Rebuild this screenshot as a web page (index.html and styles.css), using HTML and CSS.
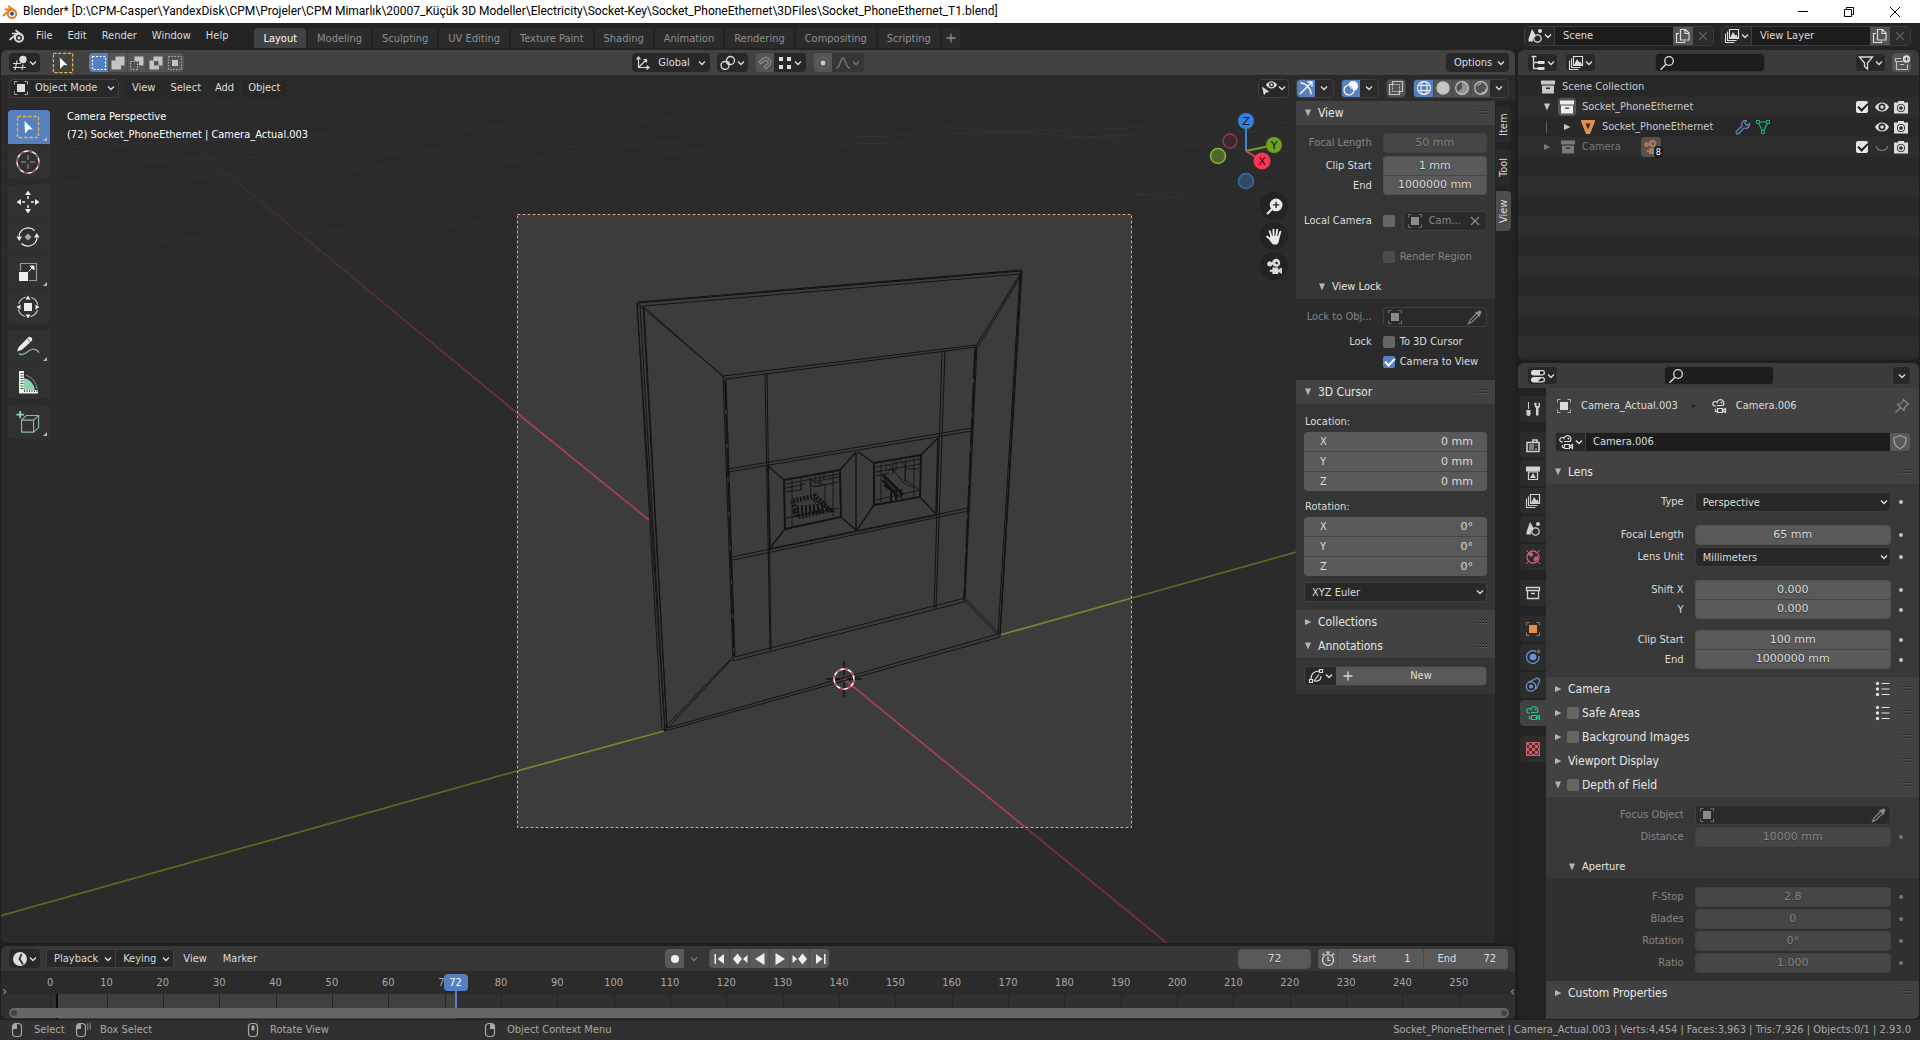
FILE: index.html
```html
<!DOCTYPE html>
<html lang="en">
<head>
<meta charset="utf-8">
<title>Blender</title>
<link rel="stylesheet" href="styles.css">
</head>
<body>
<svg class="sprite" aria-hidden="true">
  <defs>
    <symbol id="chev" viewBox="0 0 10 10"><path d="M2 3.5 5 6.5 8 3.5" fill="none" stroke="currentColor" stroke-width="1.4"/></symbol>
    <symbol id="tri-down" viewBox="0 0 8 8"><path d="M1 .5H7L4 7.5z" fill="currentColor"/></symbol>
    <symbol id="tri-right" viewBox="0 0 8 8"><path d="M1 1V7L7.500 4z" fill="currentColor"/></symbol>
    <symbol id="grip" viewBox="0 0 11 6"><path d="M0 .5h11M0 3.500h11" stroke="#151515" stroke-dasharray="1 2"/><path d="M0 1.500h11M0 4.500h11" stroke="#6a6a6a" stroke-dasharray="1 2"/></symbol>
    <symbol id="close" viewBox="0 0 16 16"><path d="M4 4 12 12M12 4 4 12" fill="none" stroke="currentColor" stroke-width="1.2"/></symbol>
    <symbol id="plus" viewBox="0 0 16 16"><path d="M8 3.500V12.500M3.500 8H12.500" fill="none" stroke="currentColor" stroke-width="1.3"/></symbol>
    <symbol id="blender" viewBox="0 0 16 16"><path d="M1 11.500 8.500 5.500H3.500M7 2.500 12.500 7" fill="none" stroke="currentColor" stroke-width="1.7" stroke-linecap="round"/><circle cx="10" cy="9.800" r="4" fill="none" stroke="currentColor" stroke-width="2"/><circle cx="10" cy="9.800" r="1.600" fill="currentColor"/></symbol>
    <symbol id="object" viewBox="0 0 16 16"><path d="M4 4h8v8H4z" fill="currentColor"/><path d="M4.500 1.500h-3v3M11.500 1.500h3v3M4.500 14.500h-3v-3M11.500 14.500h3v-3" fill="none" stroke="currentColor" opacity=".7"/></symbol>
    <symbol id="view3d" viewBox="0 0 16 16"><path d="M1 8.500h8M1 12.500h13M5 5.500 3 15M11 9.500l-1 5.500" fill="none" stroke="currentColor" stroke-width="1.2"/><circle cx="11" cy="4.500" r="3.700" fill="currentColor"/></symbol>
    <symbol id="sel-set" viewBox="0 0 16 16"><path d="M1.500 1.500h13v13h-13z" fill="none" stroke="currentColor" stroke-width="1.200" stroke-dasharray="2 1.600"/></symbol>
    <symbol id="sel-add" viewBox="0 0 16 16"><path d="M5.500 1.500h9v9H11v4H1.500V5.500h4z" fill="currentColor"/></symbol>
    <symbol id="sel-sub" viewBox="0 0 16 16"><path d="M5.500 1.500h9v9H10V6H5.500z" fill="currentColor"/><path d="M1.500 6.500h7v8h-7z" fill="none" stroke="currentColor" stroke-dasharray="1.500 1.500"/></symbol>
    <symbol id="sel-inv" viewBox="0 0 16 16"><path fill-rule="evenodd" d="M5.500 1.500h9v9H11v4H1.500V5.500h4zM6 6v4.500h4.500V6z" fill="currentColor"/></symbol>
    <symbol id="sel-int" viewBox="0 0 16 16"><path d="M5 5h6v6H5z" fill="currentColor"/><path d="M1.500 1.500h13v13h-13z" fill="none" stroke="currentColor" stroke-dasharray="1.500 1.500" opacity=".8"/></symbol>
    <symbol id="axes" viewBox="0 0 16 16"><path d="M3.500 13V2M1.500 4.500l2-2.500 2 2.500M3 12.500h11M11.500 10.500l2.500 2-2.500 2M4 12 11 5M8.500 4.500H11.500V7.500" fill="none" stroke="currentColor" stroke-width="1.200"/></symbol>
    <symbol id="pivot" viewBox="0 0 16 16"><circle cx="10.500" cy="5.500" r="4" fill="none" stroke="currentColor" stroke-width="1.300"/><circle cx="5" cy="10.500" r="4" fill="none" stroke="currentColor" stroke-width="1.300"/><circle cx="8" cy="8" r="1.800" fill="currentColor"/></symbol>
    <symbol id="magnet" viewBox="0 0 16 16"><path d="M2 7 6.500 3A5 5 0 0 1 13 10L9 14 7 12 11 8.500A2.300 2.300 0 0 0 8 5.500L4 9z" fill="none" stroke="currentColor" stroke-width="1.200"/></symbol>
    <symbol id="grid4" viewBox="0 0 16 16"><path d="M2 2h4v4H2zM10 2h4v4h-4zM2 10h4v4H2zM10 10h4v4h-4z" fill="currentColor"/></symbol>
    <symbol id="prop" viewBox="0 0 16 16"><circle cx="8" cy="8" r="6" fill="none" stroke="currentColor" opacity=".4"/><circle cx="8" cy="8" r="2.400" fill="#ccc"/></symbol>
    <symbol id="falloff" viewBox="0 0 16 16"><path d="M1 13C6 13 5 3 8 3s2 10 7 10" fill="none" stroke="currentColor" stroke-width="1.300"/></symbol>
    <symbol id="visibility" viewBox="0 0 16 16"><path d="M5 5C8 0 13 0 16 5 13 9.500 8 9.500 5 5z" fill="currentColor"/><circle cx="10.500" cy="4.800" r="2.500" fill="#2b2b2b"/><circle cx="10.500" cy="4.800" r="1.200" fill="currentColor"/><path d="M1 6.500 8.500 12 5 12.500 3 15.500z" fill="currentColor"/></symbol>
    <symbol id="gizmo" viewBox="0 0 16 16"><path d="M2.500 3C8 3 13 8 13 14.500M2 14 13.500 2.500M9.500 2H14V6.500" fill="none" stroke="currentColor" stroke-width="1.300"/></symbol>
    <symbol id="overlays" viewBox="0 0 16 16"><circle cx="10" cy="6" r="5" fill="currentColor"/><circle cx="6" cy="10" r="5" fill="#5680c2" stroke="currentColor" stroke-width="1.200"/><path d="M6 5a5 5 0 0 1 5 5 5 5 0 0 1-5-5z" fill="currentColor" opacity=".6"/></symbol>
    <symbol id="xray" viewBox="0 0 16 16"><path d="M4.500 1.500h10v10h-3v3h-10v-10h3z" fill="none" stroke="currentColor" stroke-width="1.200"/><path d="M4.500 4.500h7v7M4.500 4.500v7h7" fill="none" stroke="currentColor" stroke-dasharray="2 1"/></symbol>
    <symbol id="wire" viewBox="0 0 16 16"><g fill="none" stroke="currentColor" stroke-width="1.100"><circle cx="8" cy="8" r="6.500"/><ellipse cx="8" cy="8" rx="3" ry="6.500"/><path d="M2 5.500h12M2 10.500h12"/></g></symbol>
    <symbol id="solid" viewBox="0 0 16 16"><circle cx="8" cy="8" r="6.700" fill="currentColor"/></symbol>
    <symbol id="matprev" viewBox="0 0 16 16"><circle cx="8" cy="8" r="6.300" fill="none" stroke="currentColor" stroke-width="1.200"/><path d="M8 1.500V8L3.500 12.500A6.500 6.500 0 0 0 14.500 8 6.500 6.500 0 0 0 8 1.500z" fill="currentColor" opacity=".55"/></symbol>
    <symbol id="rendered" viewBox="0 0 16 16"><circle cx="8" cy="8" r="6.300" fill="none" stroke="currentColor" stroke-width="1.200"/><path d="M4.500 6A4.500 4.500 0 0 1 8 3.500M13 8.500A5 5 0 0 1 8 13" fill="none" stroke="currentColor"/></symbol>
    <symbol id="scene" viewBox="0 0 16 16"><path d="M5 1 9 8A4.500 4.500 0 0 0 6 13.500H1.500V11z" fill="currentColor"/><circle cx="10.500" cy="10.500" r="3.700" fill="none" stroke="currentColor" stroke-width="1.300"/><circle cx="13" cy="3" r="2" fill="currentColor"/></symbol>
    <symbol id="layer" viewBox="0 0 16 16"><path d="M5.500 1.500h9v9h-9z" fill="none" stroke="currentColor" stroke-width="1.200"/><path d="M6 10 9 4l2.500 3.500 1-1L14 10z" fill="currentColor"/><path d="M3.500 3.500v9h9M1.500 5.500v9h9" fill="none" stroke="currentColor" stroke-width="1.100"/></symbol>
    <symbol id="copy" viewBox="0 0 16 16"><path d="M5.500 1.500h5l3.500 3.500v7H5.500zM10 1.500V5.500H14M4 5.500H1.500v9h8V13" fill="none" stroke="currentColor" stroke-width="1.200"/></symbol>
    <symbol id="tree" viewBox="0 0 16 16"><path d="M1.500 1.500h5M3.500 2v11.500H8M3.500 7.500H8" fill="none" stroke="currentColor" stroke-width="1.300"/><path d="M8 6h6.500v3H8zM8 12h6.500v3H8z" fill="currentColor"/></symbol>
    <symbol id="search" viewBox="0 0 16 16"><circle cx="10" cy="6" r="4.300" fill="none" stroke="currentColor" stroke-width="1.300"/><path d="M7 9.200 1.500 14.700" stroke="currentColor" stroke-width="1.500"/></symbol>
    <symbol id="funnel" viewBox="0 0 16 16"><path d="M1.500 2h13L9.500 8v6L6.500 11.500V8z" fill="none" stroke="currentColor" stroke-width="1.300"/></symbol>
    <symbol id="newcol" viewBox="0 0 16 16"><path d="M7 3.500H1.500v3H9M2.500 6.500v8h11v-5M6 9.500h4" fill="none" stroke="currentColor" stroke-width="1.200" opacity=".8"/><circle cx="12.500" cy="4" r="3.700" fill="currentColor"/><path d="M12.500 2v4M10.500 4h4" stroke="#555"/></symbol>
    <symbol id="collection" viewBox="0 0 16 16"><path d="M1 1.500h14v4H1z" fill="currentColor"/><path fill-rule="evenodd" d="M2 6.500h12V14.500H2zM6 8.500v1.500h4V8.500z" fill="currentColor"/></symbol>
    <symbol id="col-line" viewBox="0 0 16 16"><path d="M1.500 2.500h13v3h-13zM2.500 5.500h11v8h-11zM6 8.500h4" fill="none" stroke="currentColor" stroke-width="1.300"/></symbol>
    <symbol id="mesh" viewBox="0 0 16 16"><path fill-rule="evenodd" d="M1 1h14v1.500L10 15H6L1 2.500zM5.500 4.500 8 10.500 10.500 4.500z" fill="currentColor"/></symbol>
    <symbol id="wrench" viewBox="0 0 16 16"><path d="M14.500 4.500 12 6.500 9.500 4 11.500 1.500A4 4 0 0 0 7 7L1.500 12.200A1.500 1.500 0 0 0 3.800 14.500L9 9a4 4 0 0 0 5.500-4.500z" fill="none" stroke="currentColor" stroke-width="1.200"/></symbol>
    <symbol id="meshdata" viewBox="0 0 16 16"><path d="M3 3h10L8 13z" fill="none" stroke="currentColor" stroke-width="1.200"/><path d="M1.500 1.500h3v3h-3zM11.500 1.500h3v3h-3zM6.500 11.500h3v3h-3z" fill="#2a2a2a" stroke="currentColor"/></symbol>
    <symbol id="eye" viewBox="0 0 16 16"><path fill-rule="evenodd" d="M1 8C4 2 12 2 15 8 12 14 4 14 1 8zm7-3.500a3.500 3.500 0 1 0 0 7 3.500 3.500 0 0 0 0-7z" fill="currentColor"/><circle cx="8" cy="8" r="1.800" fill="currentColor"/></symbol>
    <symbol id="eye-off" viewBox="0 0 16 16"><path d="M2 7C4 13 12 13 14 7" fill="none" stroke="currentColor" stroke-width="1.200"/></symbol>
    <symbol id="photo" viewBox="0 0 16 16"><path fill-rule="evenodd" d="M5 2h6v1.500h4v11H1V3.500h4zM8 5a4 4 0 1 0 0 8 4 4 0 0 0 0-8z" fill="currentColor"/><circle cx="8" cy="9" r="2.500" fill="none" stroke="currentColor" stroke-width="1.300"/></symbol>
    <symbol id="cam" viewBox="0 0 16 16"><g fill="none" stroke="currentColor" stroke-width="1.200"><path d="M5 8H3.500A2.300 2.300 0 1 1 6 4.500 3.500 3.500 0 1 1 12 7.500H6M6.500 10.500h5v4h-5zM11.500 12.500 14.500 10.500v4zM4.500 11v2.500h2"/></g><circle cx="10.500" cy="4.500" r="1" fill="currentColor"/></symbol>
    <symbol id="cam-solid" viewBox="0 0 16 16"><path fill-rule="evenodd" d="M3.500 3A2.500 2.500 0 1 0 6 6a3.800 3.800 0 1 0-.300-1.500A2.500 2.500 0 0 0 3.500 3zM10 3.500a1.200 1.200 0 1 1 0 2.400 1.200 1.200 0 0 1 0-2.400zM6 9h5.500v2L15 9v6l-3.500-2v2H6v-2H3.500v-2H6z" fill="currentColor"/></symbol>
    <symbol id="props" viewBox="0 0 16 16"><rect x="1" y="2" width="14" height="5.500" rx="2.700" fill="currentColor"/><rect x="1" y="9" width="14" height="5.500" rx="2.700" fill="currentColor"/><path d="M10 3.200h2.500a1.600 1.600 0 0 1 0 3.100H10z" fill="#222"/><path d="M11 10.200h1.500a1.600 1.600 0 0 1 0 3.100H8z" fill="#222"/></symbol>
    <symbol id="tool" viewBox="0 0 16 16"><path d="M3.500 1v7" stroke="currentColor"/><path d="M1.500 9h4v5q-2 2-4 0zM9 2 10 6l1 1v7.500h2.500V7l1.500-1V2l-1.500-.500V5h-2V1.500z" fill="currentColor"/></symbol>
    <symbol id="render" viewBox="0 0 16 16"><path d="M2 5.500h12v9H2zM8 5V3h4v2" fill="none" stroke="currentColor" stroke-width="1.600"/><path d="M4 8h5M4 10h5M4 12h5M11 8v1M11 11v2" stroke="currentColor"/></symbol>
    <symbol id="output" viewBox="0 0 16 16"><path d="M1 1.500h14v5H1z" fill="currentColor"/><path d="M3.500 7h9v7.500h-9z" fill="none" stroke="currentColor" stroke-width="1.200"/><path d="M5 13 8 8l3 5z" fill="currentColor"/></symbol>
    <symbol id="world" viewBox="0 0 16 16"><circle cx="8" cy="8" r="6" fill="none" stroke="currentColor" stroke-width="1.300"/><path d="M3 3.500 7 3.500 8.500 5.500 6.500 8 3 6zM9 8l4-1v3l-3 3-1.500-2z" fill="currentColor"/><path d="M1 1 3.500 3.500M12.500 12.500 15 15M12.500 3.500 15 1M1 15 3.500 12.500" stroke="currentColor"/></symbol>
    <symbol id="physics" viewBox="0 0 16 16"><path d="M11 2.600A6.300 6.300 0 1 0 14 7" fill="none" stroke="currentColor" stroke-width="1.300"/><circle cx="8" cy="8" r="3.300" fill="currentColor"/><circle cx="13.500" cy="2.500" r="2" fill="currentColor" opacity=".6"/></symbol>
    <symbol id="constraint" viewBox="0 0 16 16"><path d="M3 5.500 11 1.500A2.500 2.500 0 0 1 14.500 4.500L11 12" fill="none" stroke="currentColor" stroke-width="1.300"/><circle cx="6" cy="9.500" r="4.700" fill="none" stroke="currentColor" stroke-width="1.300"/><circle cx="6" cy="9.500" r="2" fill="currentColor"/></symbol>
    <symbol id="texture" viewBox="0 0 16 16"><path d="M1 1h14v14H1z" fill="#5a2a30"/><path d="M1 1h3v3H1zM7 1h3v3H7zM13 1h2v3h-2zM4 4h3v3H4zM10 4h3v3h-3zM1 7h3v3H1zM7 7h3v3H7zM13 7h2v3h-2zM4 10h3v3H4zM10 10h3v3h-3zM1 13h3v2H1zM7 13h3v2H7zM13 13h2v2h-2z" fill="currentColor"/><path d="M1.500 1.500h13v13h-13z" fill="none" stroke="currentColor"/></symbol>
    <symbol id="pin" viewBox="0 0 16 16"><path d="M9.500 1.500 14.500 6.500 13 7 10.500 9.500 10 12.500 3.500 6.500 6.500 5.800 9 3.200zM6.500 9.500 1.500 14.500" fill="none" stroke="currentColor" stroke-width="1.200"/></symbol>
    <symbol id="shield" viewBox="0 0 16 16"><path d="M8 1.500Q11 3.500 14 3.500C14.500 9 12 13 8 14.800 4 13 1.500 9 2 3.500Q5 3.500 8 1.500z" fill="none" stroke="currentColor" stroke-width="1.200"/></symbol>
    <symbol id="list" viewBox="0 0 16 16"><path d="M6.500 2.500h8M6.500 8h8M6.500 13.500h8" stroke="currentColor" stroke-width="1.200"/><circle cx="2.500" cy="2.500" r="1.700" fill="currentColor"/><circle cx="2.500" cy="8" r="1.700" fill="currentColor"/><circle cx="2.500" cy="13.500" r="1.700" fill="currentColor"/></symbol>
    <symbol id="dropper" viewBox="0 0 16 16"><path d="M10 3 12 1.500Q14.500 1 14.500 4L13 6 13.500 7 12.500 8 8 3.500 9 2.500z" fill="currentColor"/><path d="M9 5 3 11 1.500 14.500 5 13 11 7" fill="none" stroke="currentColor" stroke-width="1.200"/></symbol>
    <symbol id="stroke" viewBox="0 0 16 16"><path d="M1.500 11.500h3v3h-3zM11.500 1.500h3v3h-3zM3 11.500Q3 3 11.500 3M6 13Q13 14 13 8M6 13 11 6.500" fill="none" stroke="currentColor" stroke-width="1.200"/></symbol>
    <symbol id="clock" viewBox="0 0 16 16"><path d="M8 1A7 7 0 1 0 8 15 7 7 0 1 0 8 1z" fill="currentColor"/><path d="M9.500 3 7.500 8 11 13.500" fill="none" stroke="#252525" stroke-width="1.700"/></symbol>
    <symbol id="stopwatch" viewBox="0 0 16 16"><g fill="none" stroke="currentColor" stroke-width="1.200"><circle cx="8" cy="9" r="5.500"/><path d="M8 3.500V1M6 1h4M12 4.500 14 2.500M8 5.500V9.500H10.500M2.500 4 4 2.500"/></g></symbol>
    <symbol id="j-start" viewBox="0 0 16 16"><path d="M2.500 3h1.500v10H2.500zM12 3v10L5.500 8z" fill="currentColor"/></symbol>
    <symbol id="j-end" viewBox="0 0 16 16"><path d="M12 3h1.500v10H12zM4 3v10L10.500 8z" fill="currentColor"/></symbol>
    <symbol id="k-prev" viewBox="0 0 16 16"><path d="M5.500 2.500 10 8 5.500 13.500 1 8zM15.500 4v8L11 8z" fill="currentColor"/></symbol>
    <symbol id="k-next" viewBox="0 0 16 16"><path d="M10.500 2.500 15 8 10.500 13.500 6 8zM.5 4v8L5 8z" fill="currentColor"/></symbol>
    <symbol id="p-rev" viewBox="0 0 16 16"><path d="M12.500 2v12L3 8z" fill="currentColor"/></symbol>
    <symbol id="p-fwd" viewBox="0 0 16 16"><path d="M3.500 2v12L13 8z" fill="currentColor"/></symbol>
    <symbol id="m-left" viewBox="0 0 16 16"><rect x="3.500" y="1.500" width="9" height="13" rx="3.500" fill="none" stroke="currentColor" stroke-width="1.200"/><path d="M3.500 7V4.500Q4 1.500 8 1.500V7z" fill="currentColor"/></symbol>
    <symbol id="m-right" viewBox="0 0 16 16"><rect x="3.500" y="1.500" width="9" height="13" rx="3.500" fill="none" stroke="currentColor" stroke-width="1.200"/><path d="M12.500 7V4.500Q12 1.500 8 1.500V7z" fill="currentColor"/></symbol>
    <symbol id="m-mid" viewBox="0 0 16 16"><rect x="3.500" y="1.500" width="9" height="13" rx="3.500" fill="none" stroke="currentColor" stroke-width="1.200"/><rect x="6.500" y="3.500" width="3" height="5" rx="1" fill="currentColor"/></symbol>
    <symbol id="m-drag" viewBox="0 0 16 16"><rect x="1.500" y="1.500" width="9" height="13" rx="3.500" fill="none" stroke="currentColor" stroke-width="1.200"/><path d="M1.500 7V4.500Q2 1.500 6 1.500V7z" fill="currentColor"/><path d="M12.500 1.500Q13.500 4 12.500 7.500M14.800 1Q16 4 14.800 8" fill="none" stroke="currentColor" stroke-width=".8"/></symbol>
    <symbol id="t-select" viewBox="0 0 24 24"><path d="M1.500 1.500h21v21h-21z" fill="none" stroke="#e9b73f" stroke-width="1.300" stroke-dasharray="3.500 1.800"/><path d="M8.500 6 17 14.500 12.800 14.300 9 18.500z" fill="#fff"/></symbol>
    <symbol id="t-cursor" viewBox="0 0 24 24"><circle cx="12" cy="12" r="11" fill="none" stroke="#eee" stroke-width="1.300"/><circle cx="12" cy="12" r="11" fill="none" stroke="#a04452" stroke-width="1.400" stroke-dasharray="4.300 4.300"/><path d="M12 5v5M12 14v5M5 12h5M14 12h5" stroke="#999"/></symbol>
    <symbol id="t-move" viewBox="0 0 24 24"><path d="M12 .5 15 5H9zM12 23.500 9 19h6zM.5 12 5 9v6zM23.500 12 19 15V9z" fill="#eee"/><path d="M12 6v3M12 15v3M6 12h3M15 12h3" stroke="#eee" stroke-width="1.500"/></symbol>
    <symbol id="t-rotate" viewBox="0 0 24 24"><path d="M3 11A9.200 9.200 0 0 1 18.500 5.500M21 13A9.200 9.200 0 0 1 5.500 18.500" fill="none" stroke="#eee" stroke-width="1.200"/><path d="M.5 11.500h5.500L3.200 16zM18 12.500h5.500L20.800 8z" fill="#eee"/><path d="M12 8.500 15.500 12 12 15.500 8.500 12z" fill="#aaa"/></symbol>
    <symbol id="t-scale" viewBox="0 0 24 24"><path d="M4.500 11V3.500h16v17H13" fill="none" stroke="#999" stroke-width="1.200"/><path d="M3 12h9v9H3z" fill="#eee"/><path d="M12.500 11.500 17 7M14 6h4v4z" stroke="#eee" fill="#eee"/></symbol>
    <symbol id="t-transform" viewBox="0 0 24 24"><circle cx="12" cy="12" r="10" fill="none" stroke="#ccc" stroke-width="1.200" stroke-dasharray="10 5.700" stroke-dashoffset="-3"/><path d="M8 8h8v8H8z" fill="#eee"/><path d="M12 .5 14.500 4.500h-5zM12 23.500 9.500 19.500h5zM.5 12 4.500 9.500v5zM23.500 12 19.500 14.500v-5z" fill="#eee"/></symbol>
    <symbol id="t-annot" viewBox="0 0 26 24"><path d="M1 17 3 12 14 1Q18 1 17.500 5L6.500 15z" fill="#eee"/><path d="M12.500 3 15.500 6.500" stroke="#444"/><path d="M3 19Q7 22 13 17 20 11 25 18" fill="none" stroke="#7fbf9f" stroke-width="1.400"/></symbol>
    <symbol id="t-measure" viewBox="0 0 24 24"><path d="M8 20V8Q17 10 19 20z" fill="#8ed4ae"/><path d="M10 5Q20 9 21 19" fill="none" stroke="#6aa885"/><path d="M3 1h5v19h14v3.500H3z" fill="#eee"/><path d="M6 3v17" stroke="#555" stroke-width="3" stroke-dasharray="1 1.500"/><path d="M8 21h14" stroke="#555" stroke-width="2" stroke-dasharray="1 1.500"/></symbol>
    <symbol id="t-cube" viewBox="0 0 26 26"><path d="M6 11h13v13H6zM6 11 11 6h13.500L19 11M24.500 6v13L19 24" fill="none" stroke="#8ac0a2" stroke-width="1.200"/><path d="M4.500 1v8M.5 5h8" stroke="#8ed4ae" stroke-width="2"/></symbol>
    <symbol id="corner" viewBox="0 0 4 4"><path d="M4 0v4H0z" fill="#bbb"/></symbol>
  </defs>
</svg>

<header class="titlebar">
  <svg class="ic" viewBox="0 0 16 16" aria-hidden="true"><g fill="none" stroke="#e8791c" stroke-width="2" stroke-linecap="round"><path d="M1.500 11.500 8.500 5.500H3.500M7 2.500 12.500 7"/><circle cx="10" cy="9.800" r="4.200"/></g><circle cx="10" cy="9.800" r="2" fill="#1d5488"/></svg>
  <h1>Blender* [D:\CPM-Casper\YandexDisk\CPM\Projeler\CPM Mimarlık\20007_Küçük 3D Modeller\Electricity\Socket-Key\Socket_PhoneEthernet\3DFiles\Socket_PhoneEthernet_T1.blend]</h1>
  <button aria-label="Minimize"><svg class="wic" viewBox="0 0 12 12"><path d="M1 5.500h10" stroke="#000"/></svg></button>
  <button aria-label="Restore"><svg class="wic" viewBox="0 0 12 12"><path d="M1.500 3.500h7v7h-7zM3.500 3.500v-2h7v7h-2" fill="none" stroke="#000"/></svg></button>
  <button aria-label="Close"><svg class="wic" viewBox="0 0 12 12"><path d="M1 1 11 11M11 1 1 11" stroke="#000"/></svg></button>
</header>

<div class="topbar">
  <nav class="menus">
    <button class="logo" aria-label="Blender"><svg class="ic"><use href="#blender"/></svg></button>
    <button>File</button><button>Edit</button><button>Render</button><button>Window</button><button>Help</button>
  </nav>
  <nav class="tabs">
    <button class="on">Layout</button><button>Modeling</button><button>Sculpting</button><button>UV Editing</button><button>Texture Paint</button><button>Shading</button><button>Animation</button><button>Rendering</button><button>Compositing</button><button>Scripting</button><button class="add" aria-label="Add workspace"><svg class="ic"><use href="#plus"/></svg></button>
  </nav>
  <div class="ids">
    <div class="idblock"><button class="drop" aria-label="Browse scene"><svg class="ic"><use href="#scene"/></svg><svg class="ch"><use href="#chev"/></svg></button><input value="Scene" aria-label="Scene"><button class="lit" aria-label="New scene"><svg class="ic"><use href="#copy"/></svg></button><button class="off" aria-label="Remove scene"><svg class="ic"><use href="#close"/></svg></button></div>
    <div class="idblock"><button class="drop" aria-label="Browse view layer"><svg class="ic"><use href="#layer"/></svg><svg class="ch"><use href="#chev"/></svg></button><input value="View Layer" aria-label="View layer"><button class="lit" aria-label="New view layer"><svg class="ic"><use href="#copy"/></svg></button><button class="off" aria-label="Remove view layer"><svg class="ic"><use href="#close"/></svg></button></div>
  </div>
</div>

<main>
  <div class="left">
    <section class="area view3d">
      <div class="toolhead">
        <div class="side">
          <button class="btn drop" aria-label="Editor type"><svg class="ic"><use href="#view3d"/></svg><svg class="ch"><use href="#chev"/></svg></button>
          <button class="active-tool" aria-label="Select box"><svg><use href="#t-select"/></svg></button>
          <div class="group">
            <button class="blue" aria-label="Set"><svg class="ic"><use href="#sel-set"/></svg></button><button class="grey" aria-label="Extend"><svg class="ic"><use href="#sel-add"/></svg></button><button class="grey" aria-label="Subtract"><svg class="ic"><use href="#sel-sub"/></svg></button><button class="grey" aria-label="Invert"><svg class="ic"><use href="#sel-inv"/></svg></button><button class="grey" aria-label="Intersect"><svg class="ic"><use href="#sel-int"/></svg></button>
          </div>
        </div>
        <div class="mid">
          <button class="btn orient"><svg class="ic"><use href="#axes"/></svg>Global<svg class="ch"><use href="#chev"/></svg></button>
          <button class="btn drop" aria-label="Pivot"><svg class="ic"><use href="#pivot"/></svg><svg class="ch"><use href="#chev"/></svg></button>
          <div class="group"><button class="grey dim" aria-label="Snap"><svg class="ic"><use href="#magnet"/></svg></button><button class="drop dark" aria-label="Snap to"><svg class="ic"><use href="#grid4"/></svg><svg class="ch"><use href="#chev"/></svg></button></div>
          <div class="group"><button class="grey dim" aria-label="Proportional editing"><svg class="ic"><use href="#prop"/></svg></button><button class="drop faded" aria-label="Falloff"><svg class="ic"><use href="#falloff"/></svg><svg class="ch"><use href="#chev"/></svg></button></div>
        </div>
        <div class="side end"><button class="btn options">Options<svg class="ch"><use href="#chev"/></svg></button></div>
      </div>

      <div class="stage">
        <svg class="scene" viewBox="1 75 1514 868" preserveAspectRatio="xMidYMid slice" role="img" aria-label="Wireframe of a wall socket seen through the camera">
          <defs>
            <linearGradient id="redfar" gradientUnits="userSpaceOnUse" x1="180" y1="135" x2="517" y2="413"><stop offset="0" stop-color="#6e2c38" stop-opacity=".1"/><stop offset="1" stop-color="#7a3340"/></linearGradient>
          </defs>
          <g stroke="#323232" fill="none"><path d="M0 166 1296 122M0 187 800 146 1296 130M0 250 517 221M1132 196 1296 181M0 150 700 118M1132 193 1296 212M900 124 1296 152"/></g>
          <path d="M180 135 517 413" stroke="url(#redfar)" stroke-width="1.500"/>
          <path d="M1026 828 1168 944" stroke="#7a2f3e" stroke-width="1.700"/>
          <path d="M0 916 517 771M1132 598 1300 551" stroke="#547024" stroke-width="1.700"/>
          <path d="M517 214h615v613h-615z" fill="#3c3c3c"/>
          <path d="M517 413 649 520M844 679 1026 828" stroke="#a8404f" stroke-width="1.700"/>
          <path d="M517 771 664 731M1000 635 1132 598" stroke="#6f8d2f" stroke-width="1.700"/>
          <g fill="none" stroke="#141414" stroke-width="1">
            <path d="M637 303 1022 271 1000 637 665 731zM643 306 1020 274 998 634 667 728zM637 303 662 729 665 731M640 305 665 730M644 307 667 728"/>
            <path d="M638 302 1022 270M1021 272 1000 633" stroke-width="1.200"/>
            <path d="M637 303 723 376M644 307 726 379M1022 271 976 346M1020 277 978 347M1000 637 964 600M1000 634 966 599M665 731 731 660M664 728 733 657"/>
            <path d="M723 376 976 345 964 602 733 661zM726 379 977 347 965 598 735 657z"/>
            <path d="M725 380 734 656M975 349 964 600" stroke-width="1.600" stroke-dasharray="30 4"/>
            <path d="M765 374 770 650M767 374 771 650M942 351 934 609M945 351 936 608"/>
            <path d="M728 472 972 431M728 469 972 428M732 557 968 508M733 560 968 511"/>
            <path d="M770 549 936 515" stroke-width="1.800" stroke-dasharray="4 1"/>
            <path d="M768 466 784 480M856 452 840 470M856 530 841 517M770 548 785 529M768 466 770 548M856 452V530M858 452 874 463M938 438 921 455M936 514 920 497M857 530 874 505M938 438 936 514" stroke-width="1.500"/>
            <path d="M784 480 840 470 841 517 785 529zM874 463 921 455 920 497 874 505z" stroke-width="2"/>
            <path d="M786 484 839 474M786 488 805 484M786 492 801 490V483M792 480V526M786 518 839 508M833 472V516M839 477 817 481M839 482 813 487M810 478 811 498 824 514M810 480 825 485V508M811 498 831 511M811 478V486H820V475M815 474V484M824 472V480M801 478V490M876 467 920 459M876 472 920 464M876 476 889 473M881 463V502M914 458V497M906 460 905 482M876 500 920 490M893 462V474M900 461 905 465V480L920 490M889 465 904 483 914 488M886 464V470H896V461M905 469H919" stroke-width=".9"/>
            <path d="M793 501 815 496 830 510 797 517z" stroke-width="5" stroke-dasharray="2 1.500"/>
            <path d="M797 508 824 506M793 512 822 511" stroke-width="5" stroke-dasharray="2 2"/>
            <path d="M883 475 903 495M883 480 898 497M884 485 894 491" stroke-width="3"/>
            <path d="M891 490V501M896 490V500M901 489V498" stroke-width="2"/>
          </g>
          <path d="M517.500 214.500h614v613h-614z" fill="none" stroke="#2a2020"/>
          <path d="M517.500 214.500h614v613h-614z" fill="none" stroke="#efa08c" stroke-dasharray="3 2"/>
          <g fill="none"><path d="M844 661v14M844 683v14M826 679h14M848 679h14" stroke="#000"/><circle cx="844" cy="679" r="10" stroke="#fff" stroke-width="1.500"/><circle cx="844" cy="679" r="10" stroke="#d8324e" stroke-width="1.500" stroke-dasharray="3.900 3.950"/></g>
        </svg>

        <div class="viewhead">
          <button class="btn outlined mode"><svg class="ic"><use href="#object"/></svg>Object Mode<svg class="ch"><use href="#chev"/></svg></button>
          <nav><button>View</button><button>Select</button><button>Add</button><button>Object</button></nav>
          <div class="right">
            <button class="btn outlined drop" aria-label="Object types visibility"><svg class="ic"><use href="#visibility"/></svg><svg class="ch"><use href="#chev"/></svg></button>
            <div class="group outlined"><button class="blue" aria-label="Gizmos"><svg class="ic"><use href="#gizmo"/></svg></button><button aria-label="Gizmo options"><svg class="ch"><use href="#chev"/></svg></button></div>
            <div class="group outlined"><button class="blue" aria-label="Overlays"><svg class="ic"><use href="#overlays"/></svg></button><button aria-label="Overlay options"><svg class="ch"><use href="#chev"/></svg></button></div>
            <div class="group outlined"><button class="grey" aria-label="X-ray"><svg class="ic"><use href="#xray"/></svg></button></div>
            <div class="group outlined shading"><button class="blue" aria-label="Wireframe"><svg class="ic"><use href="#wire"/></svg></button><button class="grey" aria-label="Solid"><svg class="ic"><use href="#solid"/></svg></button><button class="grey" aria-label="Material preview"><svg class="ic"><use href="#matprev"/></svg></button><button class="grey" aria-label="Rendered"><svg class="ic"><use href="#rendered"/></svg></button><button aria-label="Shading options"><svg class="ch"><use href="#chev"/></svg></button></div>
          </div>
        </div>

        <div class="viewbody">
          <div class="toolbar">
            <div><button class="on" aria-label="Select box"><svg><use href="#t-select"/></svg><svg class="corner"><use href="#corner"/></svg></button><button aria-label="Cursor"><svg><use href="#t-cursor"/></svg></button></div>
            <div><button aria-label="Move"><svg><use href="#t-move"/></svg></button><button aria-label="Rotate"><svg><use href="#t-rotate"/></svg></button><button aria-label="Scale"><svg><use href="#t-scale"/></svg><svg class="corner"><use href="#corner"/></svg></button><button aria-label="Transform"><svg><use href="#t-transform"/></svg></button></div>
            <div><button aria-label="Annotate"><svg><use href="#t-annot"/></svg><svg class="corner"><use href="#corner"/></svg></button><button aria-label="Measure"><svg><use href="#t-measure"/></svg></button></div>
            <div><button aria-label="Add cube"><svg><use href="#t-cube"/></svg><svg class="corner"><use href="#corner"/></svg></button></div>
          </div>
          <div class="info"><p>Camera Perspective</p><p>(72) Socket_PhoneEthernet | Camera_Actual.003</p></div>
          <div class="nav">
            <svg class="axisball" viewBox="0 0 76 80" role="img" aria-label="View orientation">
              <circle cx="22" cy="31" r="7" fill="#3a2a2d" stroke="#963b4b" stroke-width="1.300"/>
              <path d="M38 41V14" stroke="#3f86cf" stroke-width="2"/><path d="M38 41 66 35" stroke="#75a022" stroke-width="2"/><path d="M38 41 54 51" stroke="#d8405a" stroke-width="2"/>
              <circle cx="10" cy="46" r="7.500" fill="#4f6730" stroke="#86b529" stroke-width="1.500"/>
              <circle cx="38" cy="71" r="7.500" fill="#2f4864" stroke="#3b6ca6" stroke-width="1.500"/>
              <circle cx="38" cy="11" r="8" fill="#2f83e3"/><circle cx="66" cy="35" r="8" fill="#6f9f1f"/><circle cx="54" cy="51" r="8.500" fill="#fb3653"/>
              <g font-size="11" text-anchor="middle" fill="#111"><text x="38" y="15">Z</text><text x="66" y="39">Y</text><text x="54" y="55">X</text></g>
            </svg>
            <button aria-label="Zoom"><svg viewBox="0 0 16 16"><circle cx="9.500" cy="6.500" r="6" fill="#e8e8e8"/><path d="M5.500 10.500 1 15" stroke="#e8e8e8" stroke-width="2"/><path d="M9.500 3.500v6M6.500 6.500h6" stroke="#222" stroke-width="1.300"/></svg></button>
            <button aria-label="Pan"><svg viewBox="0 0 16 16"><path d="M5 8 3.500 3M7.200 7.500 7 1.500M9.700 7.500 10.500 1.700M12 8.500 13.500 3.500M4.500 11 1 8" stroke="#e8e8e8" stroke-width="1.800" stroke-linecap="round"/><path d="M4 7.500h9L12 13 10.500 15.500H6.500L3.500 12z" fill="#e8e8e8"/></svg></button>
            <button aria-label="Camera view"><svg class="camview"><use href="#cam-solid"/></svg></button>
          </div>

          <aside class="npanel">
            <div class="head"><svg><use href="#tri-down"/></svg><h2>View</h2><svg class="grip"><use href="#grip"/></svg></div>
            <div class="body">
              <div class="row dim"><label for="n1">Focal Length</label><input class="f" id="n1" value="50 mm" disabled></div>
              <div class="row pair g3"><label for="n2">Clip Start</label><input class="f" id="n2" value="1 mm"></div>
              <div class="row pairend"><label for="n3">End</label><input class="f" id="n3" value="1000000 mm"></div>
              <div class="row g16"><label for="n4">Local Camera</label><div class="cell"><input type="checkbox" id="n4"><div class="pick dim"><svg class="ic"><use href="#object"/></svg><span>Cam...</span><svg class="ic"><use href="#close"/></svg></div></div></div>
              <div class="row g16 dim"><span></span><div class="cell tight"><input type="checkbox" id="n5" disabled><label for="n5">Render Region</label></div></div>
            </div>
            <div class="head sub"><svg><use href="#tri-down"/></svg><h3>View Lock</h3></div>
            <div class="body deep">
              <div class="row dim"><label>Lock to Obj...</label><div class="pick"><svg class="ic"><use href="#object"/></svg><span></span><svg class="ic"><use href="#dropper"/></svg></div></div>
              <div class="row g5"><span class="lab">Lock</span><div class="cell tight"><input type="checkbox" id="n6"><label for="n6">To 3D Cursor</label></div></div>
              <div class="row"><span></span><div class="cell tight"><input type="checkbox" id="n7" checked><label for="n7">Camera to View</label></div></div>
            </div>
            <div class="head"><svg><use href="#tri-down"/></svg><h2>3D Cursor</h2><svg class="grip"><use href="#grip"/></svg></div>
            <div class="body">
              <p class="title">Location:</p>
              <div class="stack"><div><label for="lx">X</label><input id="lx" value="0 mm"></div><div><label for="ly">Y</label><input id="ly" value="0 mm"></div><div><label for="lz">Z</label><input id="lz" value="0 mm"></div></div>
              <p class="title g6">Rotation:</p>
              <div class="stack"><div><label for="rx">X</label><input id="rx" value="0°"></div><div><label for="ry">Y</label><input id="ry" value="0°"></div><div><label for="rz">Z</label><input id="rz" value="0°"></div></div>
              <div class="sel g6"><select aria-label="Rotation mode"><option>XYZ Euler</option></select><svg class="ch"><use href="#chev"/></svg></div>
            </div>
            <div class="head"><svg><use href="#tri-right"/></svg><h2>Collections</h2><svg class="grip"><use href="#grip"/></svg></div>
            <div class="head"><svg><use href="#tri-down"/></svg><h2>Annotations</h2><svg class="grip"><use href="#grip"/></svg></div>
            <div class="body"><div class="newrow"><button class="drop" aria-label="Browse annotation"><svg class="ic"><use href="#stroke"/></svg><svg class="ch"><use href="#chev"/></svg></button><button class="new"><svg class="ic"><use href="#plus"/></svg><span>New</span></button></div></div>
          </aside>
          <div class="vtabs"><button>Item</button><button>Tool</button><button class="on">View</button></div>
        </div>
      </div>
    </section>

    <section class="area timeline">
      <div class="tlhead">
        <div class="side">
          <button class="btn drop" aria-label="Editor type"><svg class="ic"><use href="#clock"/></svg><svg class="ch"><use href="#chev"/></svg></button>
          <div class="group menu"><button>Playback<svg class="ch"><use href="#chev"/></svg></button><button>Keying<svg class="ch"><use href="#chev"/></svg></button></div>
          <button class="plain">View</button><button class="plain">Marker</button>
        </div>
        <div class="mid">
          <div class="group"><button class="lit" aria-label="Auto keying"><svg class="ic" viewBox="0 0 16 16"><circle cx="8" cy="8" r="4" fill="#eee"/></svg></button><button class="faded" aria-label="Keying options"><svg class="ch"><use href="#chev"/></svg></button></div>
          <div class="group transport"><button aria-label="Jump to start"><svg class="ic"><use href="#j-start"/></svg></button><button aria-label="Previous keyframe"><svg class="ic"><use href="#k-prev"/></svg></button><button aria-label="Play reversed"><svg class="ic"><use href="#p-rev"/></svg></button><button aria-label="Play"><svg class="ic"><use href="#p-fwd"/></svg></button><button aria-label="Next keyframe"><svg class="ic"><use href="#k-next"/></svg></button><button aria-label="Jump to end"><svg class="ic"><use href="#j-end"/></svg></button></div>
        </div>
        <div class="side end">
          <input class="f frame" value="72" aria-label="Current frame">
          <div class="group range"><button class="lit" aria-label="Preview range"><svg class="ic"><use href="#stopwatch"/></svg></button><div><label for="fs">Start</label><input id="fs" value="1"></div><div><label for="fe">End</label><input id="fe" value="72"></div></div>
        </div>
      </div>
      <div class="tlbody">
        <span class="edge">›</span>
        <div class="track">
          <div class="play" style="left:2.300%;width:27.300%"></div>
          <ol><li>0</li><li>10</li><li>20</li><li>30</li><li>40</li><li>50</li><li>60</li><li>70</li><li>80</li><li>90</li><li>100</li><li>110</li><li>120</li><li>130</li><li>140</li><li>150</li><li>160</li><li>170</li><li>180</li><li>190</li><li>200</li><li>210</li><li>220</li><li>230</li><li>240</li><li>250</li></ol>
          <div class="head72" style="left:29.600%"><span>72</span></div>
        </div>
        <span class="edge r">‹</span>
        <div class="scroll"><i></i><i></i></div>
      </div>
    </section>
  </div>

  <div class="rightcol">
    <section class="area outliner">
      <div class="ohead">
        <div><button class="btn outlined drop" aria-label="Editor type"><svg class="ic"><use href="#tree"/></svg><svg class="ch"><use href="#chev"/></svg></button><button class="btn outlined drop" aria-label="Display mode"><svg class="ic"><use href="#layer"/></svg><svg class="ch"><use href="#chev"/></svg></button></div>
        <label class="find"><svg class="ic"><use href="#search"/></svg><input aria-label="Filter outliner"></label>
        <div class="e"><button class="btn outlined drop" aria-label="Filter"><svg class="ic"><use href="#funnel"/></svg><svg class="ch"><use href="#chev"/></svg></button><button class="sq" aria-label="New collection"><svg class="ic"><use href="#newcol"/></svg></button></div>
      </div>
      <ul class="tree">
        <li class="l0"><svg class="ic"><use href="#collection"/></svg><span>Scene Collection</span></li>
        <li class="l1"><svg class="tri"><use href="#tri-down"/></svg><b><svg class="ic"><use href="#collection"/></svg></b><span>Socket_PhoneEthernet</span><em><input type="checkbox" checked aria-label="Enable Socket_PhoneEthernet"><svg class="ic"><use href="#eye"/></svg><svg class="ic"><use href="#photo"/></svg></em></li>
        <li class="l2"><i></i><svg class="tri"><use href="#tri-right"/></svg><svg class="ic orange"><use href="#mesh"/></svg><span>Socket_PhoneEthernet</span><svg class="ic wrench"><use href="#wrench"/></svg><svg class="ic teal"><use href="#meshdata"/></svg><em><svg class="ic"><use href="#eye"/></svg><svg class="ic"><use href="#photo"/></svg></em></li>
        <li class="l1 hid"><svg class="tri"><use href="#tri-right"/></svg><svg class="ic coll"><use href="#collection"/></svg><span>Camera</span><strong><svg class="ic"><use href="#cam-solid"/></svg><small>8</small></strong><em><input type="checkbox" checked aria-label="Enable Camera"><svg class="ic closed"><use href="#eye-off"/></svg><svg class="ic"><use href="#photo"/></svg></em></li>
      </ul>
    </section>

    <section class="area properties">
      <div class="ohead">
        <div><button class="btn outlined drop" aria-label="Editor type"><svg class="ic"><use href="#props"/></svg><svg class="ch"><use href="#chev"/></svg></button></div>
        <label class="find"><svg class="ic"><use href="#search"/></svg><input aria-label="Search properties"></label>
        <div class="e"><button class="btn outlined sqd" aria-label="Options"><svg class="ch"><use href="#chev"/></svg></button></div>
      </div>
      <div class="pbody">
        <nav class="ptabs">
          <button aria-label="Tool"><svg class="ic"><use href="#tool"/></svg></button>
          <button class="gap" aria-label="Render"><svg class="ic"><use href="#render"/></svg></button>
          <button aria-label="Output"><svg class="ic"><use href="#output"/></svg></button>
          <button aria-label="View layer"><svg class="ic"><use href="#layer"/></svg></button>
          <button aria-label="Scene"><svg class="ic"><use href="#scene"/></svg></button>
          <button class="red" aria-label="World"><svg class="ic"><use href="#world"/></svg></button>
          <button class="gap" aria-label="Collection"><svg class="ic"><use href="#col-line"/></svg></button>
          <button class="gap orange" aria-label="Object"><svg class="ic"><use href="#object"/></svg></button>
          <button class="bl" aria-label="Physics"><svg class="ic"><use href="#physics"/></svg></button>
          <button class="bl" aria-label="Constraints"><svg class="ic"><use href="#constraint"/></svg></button>
          <button class="on" aria-label="Camera data"><svg class="ic"><use href="#cam"/></svg></button>
          <button class="gap red" aria-label="Texture"><svg class="ic"><use href="#texture"/></svg></button>
        </nav>
        <div class="pcontent">
          <div class="crumb"><svg class="ic"><use href="#object"/></svg><span>Camera_Actual.003</span><svg class="sep"><use href="#tri-right"/></svg><svg class="ic"><use href="#cam"/></svg><span>Camera.006</span><svg class="ic pin"><use href="#pin"/></svg></div>
          <div class="idrow"><button class="drop" aria-label="Browse camera data"><svg class="ic"><use href="#cam"/></svg><svg class="ch"><use href="#chev"/></svg></button><input value="Camera.006" aria-label="Camera data name"><button class="lit" aria-label="Fake user"><svg class="ic"><use href="#shield"/></svg></button></div>
          <div class="head"><svg><use href="#tri-down"/></svg><h2>Lens</h2><svg class="grip"><use href="#grip"/></svg></div>
          <div class="body">
            <div class="row"><label for="p1">Type</label><div class="sel"><select id="p1"><option>Perspective</option></select><svg class="ch"><use href="#chev"/></svg></div><i></i></div>
            <div class="row g13"><label for="p2">Focal Length</label><input class="f" id="p2" value="65 mm"><i></i></div>
            <div class="row g2"><label for="p3">Lens Unit</label><div class="sel"><select id="p3"><option>Millimeters</option></select><svg class="ch"><use href="#chev"/></svg></div><i></i></div>
            <div class="row pair g13"><label for="p4">Shift X</label><input class="f" id="p4" value="0.000"><i></i></div>
            <div class="row pairend"><label for="p5">Y</label><input class="f" id="p5" value="0.000"><i></i></div>
            <div class="row pair g11"><label for="p6">Clip Start</label><input class="f" id="p6" value="100 mm"><i></i></div>
            <div class="row pairend"><label for="p7">End</label><input class="f" id="p7" value="1000000 mm"><i></i></div>
          </div>
          <div class="head"><svg><use href="#tri-right"/></svg><h2>Camera</h2><svg class="ic list"><use href="#list"/></svg><svg class="grip"><use href="#grip"/></svg></div>
          <div class="head"><svg><use href="#tri-right"/></svg><input type="checkbox" id="h1"><label for="h1">Safe Areas</label><svg class="ic list"><use href="#list"/></svg><svg class="grip"><use href="#grip"/></svg></div>
          <div class="head"><svg><use href="#tri-right"/></svg><input type="checkbox" id="h2"><label for="h2">Background Images</label><svg class="grip"><use href="#grip"/></svg></div>
          <div class="head"><svg><use href="#tri-right"/></svg><h2>Viewport Display</h2><svg class="grip"><use href="#grip"/></svg></div>
          <div class="head"><svg><use href="#tri-down"/></svg><input type="checkbox" id="h3"><label for="h3">Depth of Field</label><svg class="grip"><use href="#grip"/></svg></div>
          <div class="body nopad">
            <div class="row dim"><label>Focus Object</label><div class="pick"><svg class="ic"><use href="#object"/></svg><span></span><svg class="ic"><use href="#dropper"/></svg></div></div>
            <div class="row dim g2"><label for="p8">Distance</label><input class="f" id="p8" value="10000 mm" disabled><i></i></div>
          </div>
          <div class="head sub"><svg><use href="#tri-down"/></svg><h3>Aperture</h3></div>
          <div class="body deep">
            <div class="row dim"><label for="p9">F-Stop</label><input class="f" id="p9" value="2.8" disabled><i></i></div>
            <div class="row dim g2"><label for="p10">Blades</label><input class="f" id="p10" value="0" disabled><i></i></div>
            <div class="row dim g2"><label for="p11">Rotation</label><input class="f" id="p11" value="0°" disabled><i></i></div>
            <div class="row dim g2"><label for="p12">Ratio</label><input class="f" id="p12" value="1.000" disabled><i></i></div>
          </div>
          <div class="head"><svg><use href="#tri-right"/></svg><h2>Custom Properties</h2><svg class="grip"><use href="#grip"/></svg></div>
        </div>
      </div>
    </section>
  </div>
</main>

<footer>
  <span class="s1"><svg class="ic"><use href="#m-left"/></svg>Select</span>
  <span class="s2"><svg class="ic"><use href="#m-drag"/></svg>Box Select</span>
  <span class="s3"><svg class="ic"><use href="#m-mid"/></svg>Rotate View</span>
  <span class="s4"><svg class="ic"><use href="#m-right"/></svg>Object Context Menu</span>
  <span class="stats">Socket_PhoneEthernet | Camera_Actual.003 | Verts:4,454 | Faces:3,963 | Tris:7,926 | Objects:0/1 | 2.93.0</span>
</footer>
</body>
</html>
```
FILE: styles.css
```css
* { box-sizing: border-box; }
:root {
  --ui: "DejaVu Sans Condensed", "DejaVu Sans", sans-serif;
  --num: "DejaVu Sans", sans-serif;
  --blue: #5680c2;
}
html, body { height: 100%; }
body { margin: 0; display: flex; flex-direction: column; background: #1f1f1f; color: #dcdcdc; font: 11px/20px var(--ui); overflow: hidden; }
h1, h2, h3, p, ul, ol { margin: 0; padding: 0; font: inherit; list-style: none; }
i, em, b, strong, small { font: inherit; }
button, input, select { font: inherit; color: inherit; border: 0; margin: 0; padding: 0; background: none; min-width: 0; }
button { display: flex; align-items: center; justify-content: center; white-space: nowrap; }
svg { display: block; flex: none; }
.sprite { position: absolute; width: 0; height: 0; }
.ic { width: 16px; height: 16px; }
.ch { width: 10px; height: 10px; }

.titlebar { display: flex; align-items: center; flex: 0 0 23px; background: #fff; color: #000; padding: 0 2px; }
.titlebar h1 { flex: 1; margin-left: 5px; font: 12px/23px Roboto, "Noto Sans", sans-serif; white-space: nowrap; overflow: hidden; }
.titlebar button { width: 46px; height: 20px; }
.wic { width: 12px; height: 12px; }

.topbar { display: flex; flex: 0 0 27px; background: #232323; padding: 0 9px; }
.menus { display: flex; height: 27px; padding-bottom: 1px; }
.menus button { padding: 0 7px; }
.menus .logo { padding: 0 4px 0 0; }
.menus button + button { margin-right: 1px; }
.tabs { display: flex; gap: 2px; align-items: flex-end; padding: 0 0 2px 18px; flex: 1; color: #8f8f8f; }
.tabs button { height: 20px; padding: 2px 9px 0; background: #2b2b2b; border-radius: 4px 4px 0 0; }
.tabs .on { background: #424242; color: #fff; }
.tabs .add { padding: 0 1px; }
.ids { display: flex; gap: 7px; padding-top: 3px; }
.idblock { display: flex; height: 20px; width: 190px; border: 1px solid #3d3d3d; border-radius: 4px; background: #1d1d1d; overflow: hidden; }
.idblock input { flex: 1; padding: 0 8px; }
.idblock .drop, .idrow .drop { width: 30px; background: #282828; border-right: 1px solid #3d3d3d; }
.idblock .lit { width: 20px; background: #545454; }
.idblock .off { width: 20px; background: #2b2b2b; color: #5c5c5c; }

main { display: flex; flex: 1; gap: 3px; padding: 0 1px; min-height: 0; }
.left { flex: 1; min-width: 0; display: flex; flex-direction: column; gap: 3px; }
.rightcol { flex: 0 0 401px; display: flex; flex-direction: column; gap: 3px; min-height: 0; }
.area { border-radius: 6px; overflow: hidden; display: flex; flex-direction: column; background: #2b2b2b; }
.view3d { flex: 1; min-height: 0; }

.toolhead, .tlhead { display: flex; align-items: center; flex: 0 0 25px; background: #424242; padding: 0 6px 0 8px; }
.side { flex: 1 1 0; display: flex; align-items: center; }
.end { justify-content: flex-end; }
.mid { display: flex; align-items: center; gap: 7px; padding-right: 22px; }
.btn { height: 19px; background: #282828; border-radius: 4px; }
.outlined { border: 1px solid #3f3f3f; }
.drop { width: 31px; }
.active-tool { width: 22px; height: 22px; margin: 0 15px 0 12px; }
.active-tool svg { width: 22px; height: 22px; }
.group { display: flex; height: 19px; border-radius: 4px; overflow: hidden; background: #282828; }
.group button { width: 19px; height: 100%; }
.group .drop { width: 32px; }
.blue { background: var(--blue); color: #fff; }
.grey { background: #545454; color: #c4c4c4; box-shadow: inset 1px 0 #484848; }
.dim.grey { color: #8a8a8a; }
.faded { background: #363636; color: #777; }
.lit { background: #595959; }
.orient { width: 78px; padding: 0 4px; gap: 7px; }
.orient .ch, .mode .ch, .options .ch { margin-left: auto; }
.options { width: 63px; padding: 0 3px 0 8px; }

.stage { position: relative; flex: 1; display: flex; flex-direction: column; min-height: 0; }
.scene { position: absolute; inset: 0; width: 100%; height: 100%; }
.viewhead, .viewbody { position: relative; display: flex; }
.viewhead { flex: 0 0 26px; align-items: center; padding: 0 6px 0 8px; }
.mode { width: 110px; padding: 0 2px 0 3px; gap: 6px; }
.viewhead nav { display: flex; gap: 2px; margin-left: 6px; }
.viewhead nav button { height: 20px; padding: 0 7px; background: #282828; border-radius: 4px; }
.viewhead nav button + button { padding: 0 6px; }
.right { margin-left: auto; display: flex; gap: 7px; }
.viewhead .group { background: #2b2b2b; }
.viewhead .group button { width: 18px; }
.viewhead .shading button:not(:last-child) { width: 19px; }

.viewbody { flex: 1; min-height: 0; }
.toolbar { display: flex; flex-direction: column; gap: 6px; padding: 9px 0 0 7px; }
.toolbar div { display: flex; flex-direction: column; gap: 1px; width: 42px; border-radius: 4px; background: #2b2b2b; overflow: hidden; }
.toolbar button { position: relative; width: 42px; height: 34px; padding-right: 2px; background: #313131; }
.toolbar .on { background: var(--blue); }
.toolbar button > svg { width: 24px; height: 24px; }
.toolbar button .corner { position: absolute; right: 3px; bottom: 3px; width: 4px; height: 4px; }
.info { flex: 1; padding: 7px 0 0 17px; line-height: 18px; color: #fff; }
.nav { width: 88px; display: flex; flex-direction: column; align-items: flex-end; padding: 9px 8px 0 0; }
.axisball { width: 76px; height: 80px; margin-bottom: 2px; align-self: flex-start; font-family: var(--num); }
.nav button { width: 28px; height: 28px; margin-bottom: 2px; border-radius: 50%; background: #232323; }
.nav button svg { width: 17px; height: 17px; }

.npanel { width: 199px; align-self: flex-start; background: #353535; }
.head { display: flex; align-items: center; height: 24px; padding: 0 7px 0 8px; gap: 6px; background: #424242; font-size: 12px; color: #e6e6e6; }
.head > svg:first-child { width: 8px; height: 8px; color: #b4b4b4; }
.head .grip { width: 11px; height: 6px; margin-left: auto; }
.head .list { margin-left: auto; color: #e0e0e0; }
.head .list + .grip { margin-left: 4px; }
.head input { margin: 0 -3px 0 -1px; }
.head.sub { background: none; padding-left: 22px; font-size: 11px; }
.body { padding: 8px; }
.body.deep { background: #2b2b2b; }
.row { display: flex; height: 20px; align-items: center; }
.row.pairend { height: 19px; }
.row > label, .row > .lab, .row > span { flex: 1; text-align: right; padding-right: 11px; white-space: nowrap; }
.npanel .row > :nth-child(2) { flex: 0 0 57%; width: 57%; }
.f { height: 20px; border: 1px solid #525252; border-radius: 4px; background: #595959; text-align: center; font-family: var(--num); text-shadow: 0 1px 1px #333; }
.pair .f { border-radius: 4px 4px 0 0; border-bottom-color: #454545; }
.pairend .f { height: 19px; border-radius: 0 0 4px 4px; border-top: 0; }
.row.dim > label, .dim label { color: #858585; }
.dim .f { background: #464646; border-color: #424242; color: #858585; }
.dim.pick, .dim .pick { color: #8a8a8a; }
.g2 { margin-top: 2px; } .g3 { margin-top: 3px; } .g5 { margin-top: 5px; } .g6 { margin-top: 6px; } .g11 { margin-top: 11px; } .g13 { margin-top: 13px; } .g16 { margin-top: 16px; }
.cell { display: flex; align-items: center; gap: 8px; }
.tight { gap: 5px; white-space: nowrap; }
.pick { flex: 1; display: flex; align-items: center; height: 20px; padding: 0 3px; border: 1px solid #404040; border-radius: 4px; background: #2a2a2a; }
.pick span { flex: 1; padding-left: 6px; }
input[type=checkbox] { appearance: none; width: 12px; height: 12px; border-radius: 2px; background: #666; flex: none; }
input[type=checkbox]:disabled { background: #4b4b4b; }
input[type=checkbox]:checked { background: var(--blue); }
input[type=checkbox]:checked::before { content: ""; display: block; width: 8px; height: 4px; margin: 2px; border: solid #fff; border-width: 0 0 2px 2px; transform: rotate(-45deg); }
.title { line-height: 20px; padding-left: 1px; }
.stack { border-radius: 4px; overflow: hidden; background: #595959; }
.stack div { display: flex; height: 20px; padding: 0 14px 0 16px; justify-content: space-between; border-bottom: 1px solid #454545; line-height: 19px; }
.stack div:last-child { border: 0; height: 19px; }
.stack input { width: 80px; text-align: right; font-family: var(--num); }
.sel { position: relative; height: 20px; }
.sel select { appearance: none; width: 100%; height: 20px; padding: 0 7px; border: 1px solid #3f3f3f; border-radius: 4px; background: #282828; }
.sel .ch { position: absolute; right: 2px; top: 5px; }
.newrow { display: flex; height: 20px; border-radius: 4px; overflow: hidden; border: 1px solid #404040; background: #282828; }
.new { flex: 1; background: #595959; padding-left: 4px; }
.new span { flex: 1; }
.vtabs { width: 20px; padding: 6px 4px 0 1px; display: flex; flex-direction: column; gap: 6px; background: #232323; }
.vtabs button { writing-mode: vertical-rl; transform: rotate(180deg); width: 15px; height: 36px; background: #2a2a2a; border-radius: 4px 0 0 4px; line-height: 15px; }
.vtabs .on { background: #4d4d4d; height: 40px; }

.timeline { flex: 0 0 73px; }
.tlhead { background: #373737; padding-right: 7px; }
.tlhead .side:first-child .btn { margin-right: 6px; }
.group.menu { border: 1px solid #404040; }
.group.menu button { width: auto; padding: 0 2px 0 7px; gap: 5px; }
.group.menu button + button { border-left: 1px solid #404040; }
.plain { padding: 0 8px; }
.menu + .plain { padding-left: 9px; }
.tlhead .mid { gap: 6px; padding-right: 23px; }
.mid .lit + .faded { width: 19px; }
.transport button { width: 20px; background: #595959; border-left: 1px solid #4a4a4a; color: #eee; }
.tlhead .end .f { width: 73px; margin-right: 7px; }
.range { height: 20px; background: #595959; width: 190px; }
.range button { height: 20px; }
.range div { display: flex; flex: 1; padding: 0 12px 0 14px; border-left: 1px solid #4a4a4a; }
.range input { flex: 1; width: 20px; text-align: right; }
.tlbody { position: relative; flex: 1; background: #2b2b2b; }
.track { position: relative; margin: 0 28px 0 21px; height: 48px; }
.track::before { content: ""; position: absolute; left: -21px; right: -28px; top: 23px; bottom: 0; background: #303030; }
.play { position: absolute; top: 23px; bottom: 0; background: #414141; border-left: 2px solid #0c0c0c; }
.track ol { position: relative; height: 37px; display: grid; grid-template-columns: repeat(26, 1fr); text-align: center; line-height: 24px; color: #a8a8a8; }
.track li { position: relative; }
.track li::after { content: ""; position: absolute; left: 50%; top: 23px; bottom: 0; width: 1px; background: #262626; }
.head72 { position: absolute; top: 3px; bottom: 11px; width: 24px; margin-left: -12px; }
.head72 span { position: relative; display: block; height: 17px; line-height: 17px; text-align: center; color: #fff; background: var(--blue); border-radius: 4px; }
.head72::after { content: ""; position: absolute; left: 11px; top: 17px; bottom: 0; width: 2px; background: var(--blue); }
.scroll { position: absolute; left: 8px; right: 6px; bottom: 1px; height: 10px; display: flex; justify-content: space-between; padding: 2px; border-radius: 5px; background: #666; }
.scroll i { width: 6px; height: 6px; border-radius: 3px; background: #444; }
.edge { position: absolute; left: 1px; top: 10px; font-size: 14px; color: #999; }
.edge.r { left: auto; right: 0; }

.outliner { flex: 0 0 310px; }
.ohead { display: grid; grid-template-columns: 1fr 110px 1fr; align-items: center; flex: 0 0 25px; background: #3b3b3b; padding: 0 8px 0 9px; }
.ohead > div { display: flex; gap: 7px; }
.ohead .e { justify-content: flex-end; gap: 6px; }
.find { display: flex; align-items: center; height: 19px; padding-left: 3px; background: #1d1d1d; border: 1px solid #363636; border-radius: 4px; }
.outliner .find { margin-left: -9px; margin-right: 9px; }
.find input { width: 100%; }
.sq, .sqd { width: 19px; height: 19px; border-radius: 4px; }
.sq { background: #545454; }
.tree { flex: 1; padding-top: 2px; background: repeating-linear-gradient(#282828 0 20px, #2d2d2d 20px 40px) 0 2px; }
.tree li { display: flex; align-items: center; height: 20px; padding-right: 10px; color: #c8c8c8; }
.tree span { margin-left: 6px; }
.l0 { padding-left: 22px; }
.l1 { padding-left: 25px; }
.tri { width: 8px; height: 8px; }
.tree b { width: 18px; height: 18px; padding: 1px; margin-left: 7px; border-radius: 4px; background: #565656; color: #eee; }
.coll { margin-left: 9px; }
.l2 { padding-left: 28px; }
.l2 i { width: 1px; height: 12px; background: #5c5c5c; margin-right: 16px; }
.l2 .orange { margin-left: 9px; }
.orange { color: #e0904c; }
.wrench { margin-left: 22px; color: #6187c4; }
.teal { margin-left: 4px; color: #18b584; }
.tree em { margin-left: auto; display: flex; align-items: center; gap: 3px; color: #ddd; }
.tree em input { margin-right: 3px; }
.tree em input:checked { background: #e6e6e6; }
.tree em input:checked::before { border-color: #222; }
.tree .hid, .closed { color: #787878; }
.tree strong { position: relative; width: 20px; height: 20px; margin-left: 20px; padding: 2px; border-radius: 4px; background: #5a5149; color: #a5795c; }
.tree small { position: absolute; right: -2px; bottom: -1px; width: 9px; height: 12px; font-size: 9px; line-height: 12px; text-align: center; background: #1c1c1c; color: #fff; border-radius: 4px; }

.properties { flex: 1; min-height: 0; }
.pbody { display: flex; flex: 1; min-height: 0; background: #232323; }
.ptabs { width: 28px; padding: 8px 0 0 2px; display: flex; flex-direction: column; gap: 2px; color: #d0d0d0; }
.ptabs button { flex: none; width: 26px; height: 26px; background: #2c2c2c; border-radius: 4px 0 0 4px; }
.ptabs .gap { margin-top: 8px; }
.ptabs .on { background: #424242; color: #1cc48e; }
.ptabs .red { color: #c4616c; }
.ptabs .bl { color: #6b93d1; }
.ptabs .orange { color: #e0904c; }
.pcontent { flex: 1; background: #424242; min-width: 0; }
.crumb { display: flex; align-items: center; height: 36px; padding: 0 9px 0 10px; }
.crumb span { margin-left: 9px; }
.crumb .sep { width: 6px; height: 6px; margin: 0 14px 0 13px; color: #282828; }
.pin { margin-left: auto; color: #888; }
.idrow { display: flex; height: 20px; margin: 8px 8px 8px 9px; background: #1d1d1d; border-radius: 4px; overflow: hidden; border: 1px solid #3d3d3d; }
.idrow input { flex: 1; padding: 0 7px; }
.idrow .lit { width: 20px; color: #a0a0a0; }
.properties .body { background: #383838; }
.properties .nopad { padding-bottom: 0; }
.properties .sub { background: #383838; height: 32px; padding-top: 8px; }
.properties .body.deep { background: #303030; }
.properties .row > :nth-child(2) { flex: 0 0 55%; width: 55%; }
.properties .row > i { flex: none; width: 4px; height: 4px; margin: 0 8px; border-radius: 50%; background: #c4c4c4; }
.properties .row.dim > i { background: #777; }
.properties .pick { margin-right: 20px; }

footer { display: flex; align-items: center; flex: 0 0 20px; margin-top: 1px; background: #303030; color: #a8a8a8; padding: 0 9px; line-height: 20px; }
footer span { display: flex; align-items: center; gap: 9px; white-space: nowrap; }
.s1 { width: 66px; }
.s2 { width: 170px; }
.s3 { width: 237px; }
.stats { margin-left: auto; }
```
